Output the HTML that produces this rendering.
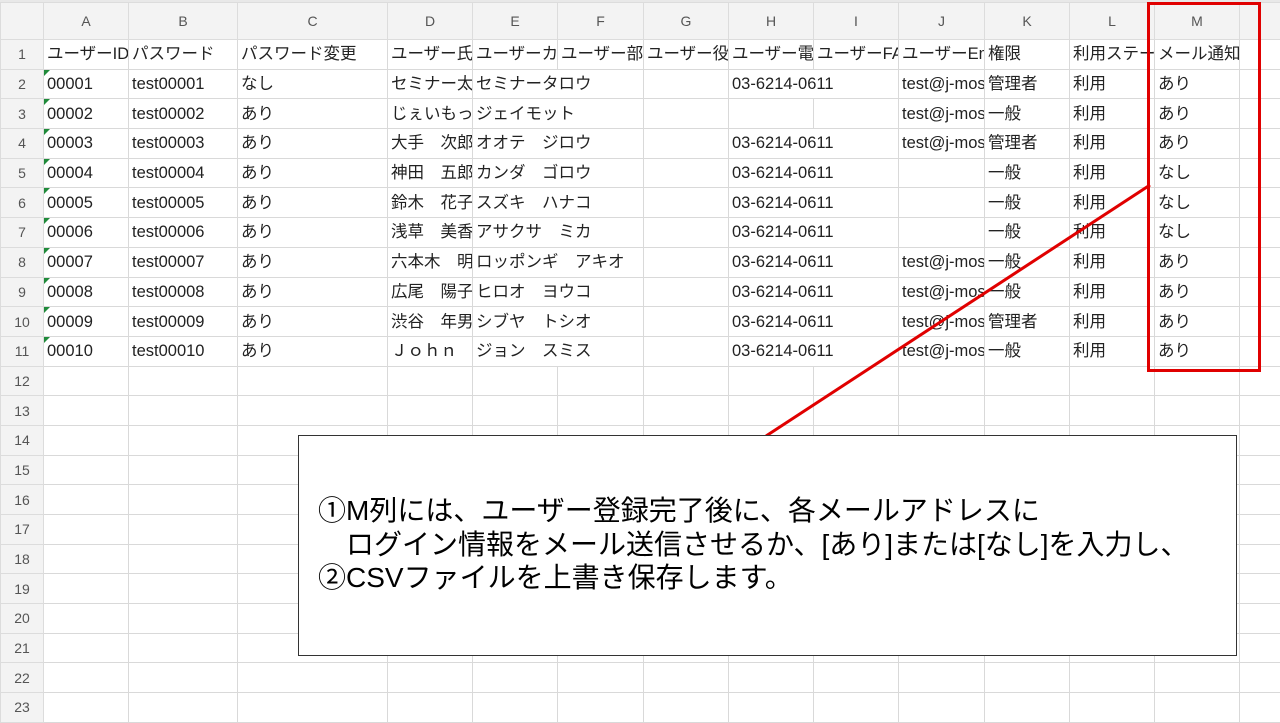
<!DOCTYPE html>
<html><head><meta charset="utf-8">
<style>
body{margin:0;width:1280px;height:720px;overflow:hidden;background:#fff;font-family:"Liberation Sans","Noto Sans CJK JP",sans-serif;position:relative}
.strip{position:absolute;left:0;top:0;width:1280px;height:3px;background:#e8e8e8}
table{position:absolute;left:0;top:2px;width:1280px;border-collapse:collapse;table-layout:fixed}
td{border:1px solid #d9d9d9;padding:0;height:28.7px;font-size:16.5px;color:#222;overflow:hidden;white-space:nowrap}
td div{overflow:hidden;white-space:nowrap;padding-left:3px;line-height:28px;height:28px}
tr.h td{height:36px;background:#f3f3f3;color:#555;font-size:14px;text-align:center;border-color:#dcdcdc}
td.r{background:#f3f3f3;color:#555;font-size:14px;text-align:center;border-color:#dcdcdc}
td.g{position:relative}
td.g:before{content:"";position:absolute;left:0;top:0;border-top:6px solid #1f8a3a;border-right:6px solid transparent}
</style></head><body>
<div class="strip"></div>
<table>
<colgroup><col style="width:43px"><col style="width:85px"><col style="width:109px"><col style="width:150px"><col style="width:85px"><col style="width:85px"><col style="width:86px"><col style="width:85px"><col style="width:85px"><col style="width:85px"><col style="width:86px"><col style="width:85px"><col style="width:85px"><col style="width:85px"><col style="width:41px"></colgroup>
<tr class="h"><td></td><td>A</td><td>B</td><td>C</td><td>D</td><td>E</td><td>F</td><td>G</td><td>H</td><td>I</td><td>J</td><td>K</td><td>L</td><td>M</td><td></td></tr>
<tr><td class="r">1</td><td><div>ユーザーID</div></td><td><div>パスワード</div></td><td><div>パスワード変更</div></td><td><div>ユーザー氏名</div></td><td><div>ユーザーカナ</div></td><td><div>ユーザー部署</div></td><td><div>ユーザー役職</div></td><td><div>ユーザー電話</div></td><td><div>ユーザーFAX</div></td><td><div>ユーザーEmail</div></td><td><div>権限</div></td><td><div>利用ステータス</div></td><td><div>メール通知</div></td><td></td></tr>
<tr><td class="r">2</td><td class="g"><div>00001</div></td><td><div>test00001</div></td><td><div>なし</div></td><td><div>セミナー太郎</div></td><td colspan="2"><div>セミナータロウ</div></td><td></td><td colspan="2"><div>03-6214-0611</div></td><td><div>test@j-moss</div></td><td><div>管理者</div></td><td><div>利用</div></td><td><div>あり</div></td><td></td></tr>
<tr><td class="r">3</td><td class="g"><div>00002</div></td><td><div>test00002</div></td><td><div>あり</div></td><td><div>じぇいもっと</div></td><td colspan="2"><div>ジェイモット</div></td><td></td><td></td><td></td><td><div>test@j-moss</div></td><td><div>一般</div></td><td><div>利用</div></td><td><div>あり</div></td><td></td></tr>
<tr><td class="r">4</td><td class="g"><div>00003</div></td><td><div>test00003</div></td><td><div>あり</div></td><td><div>大手　次郎</div></td><td colspan="2"><div>オオテ　ジロウ</div></td><td></td><td colspan="2"><div>03-6214-0611</div></td><td><div>test@j-moss</div></td><td><div>管理者</div></td><td><div>利用</div></td><td><div>あり</div></td><td></td></tr>
<tr><td class="r">5</td><td class="g"><div>00004</div></td><td><div>test00004</div></td><td><div>あり</div></td><td><div>神田　五郎</div></td><td colspan="2"><div>カンダ　ゴロウ</div></td><td></td><td colspan="2"><div>03-6214-0611</div></td><td></td><td><div>一般</div></td><td><div>利用</div></td><td><div>なし</div></td><td></td></tr>
<tr><td class="r">6</td><td class="g"><div>00005</div></td><td><div>test00005</div></td><td><div>あり</div></td><td><div>鈴木　花子</div></td><td colspan="2"><div>スズキ　ハナコ</div></td><td></td><td colspan="2"><div>03-6214-0611</div></td><td></td><td><div>一般</div></td><td><div>利用</div></td><td><div>なし</div></td><td></td></tr>
<tr><td class="r">7</td><td class="g"><div>00006</div></td><td><div>test00006</div></td><td><div>あり</div></td><td><div>浅草　美香</div></td><td colspan="2"><div>アサクサ　ミカ</div></td><td></td><td colspan="2"><div>03-6214-0611</div></td><td></td><td><div>一般</div></td><td><div>利用</div></td><td><div>なし</div></td><td></td></tr>
<tr><td class="r">8</td><td class="g"><div>00007</div></td><td><div>test00007</div></td><td><div>あり</div></td><td><div>六本木　明</div></td><td colspan="2"><div>ロッポンギ　アキオ</div></td><td></td><td colspan="2"><div>03-6214-0611</div></td><td><div>test@j-moss</div></td><td><div>一般</div></td><td><div>利用</div></td><td><div>あり</div></td><td></td></tr>
<tr><td class="r">9</td><td class="g"><div>00008</div></td><td><div>test00008</div></td><td><div>あり</div></td><td><div>広尾　陽子</div></td><td colspan="2"><div>ヒロオ　ヨウコ</div></td><td></td><td colspan="2"><div>03-6214-0611</div></td><td><div>test@j-moss</div></td><td><div>一般</div></td><td><div>利用</div></td><td><div>あり</div></td><td></td></tr>
<tr><td class="r">10</td><td class="g"><div>00009</div></td><td><div>test00009</div></td><td><div>あり</div></td><td><div>渋谷　年男</div></td><td colspan="2"><div>シブヤ　トシオ</div></td><td></td><td colspan="2"><div>03-6214-0611</div></td><td><div>test@j-moss</div></td><td><div>管理者</div></td><td><div>利用</div></td><td><div>あり</div></td><td></td></tr>
<tr><td class="r">11</td><td class="g"><div>00010</div></td><td><div>test00010</div></td><td><div>あり</div></td><td><div>Ｊｏｈｎ　Ｓ</div></td><td colspan="2"><div>ジョン　スミス</div></td><td></td><td colspan="2"><div>03-6214-0611</div></td><td><div>test@j-moss</div></td><td><div>一般</div></td><td><div>利用</div></td><td><div>あり</div></td><td></td></tr>
<tr><td class="r">12</td><td></td><td></td><td></td><td></td><td></td><td></td><td></td><td></td><td></td><td></td><td></td><td></td><td></td><td></td></tr>
<tr><td class="r">13</td><td></td><td></td><td></td><td></td><td></td><td></td><td></td><td></td><td></td><td></td><td></td><td></td><td></td><td></td></tr>
<tr><td class="r">14</td><td></td><td></td><td></td><td></td><td></td><td></td><td></td><td></td><td></td><td></td><td></td><td></td><td></td><td></td></tr>
<tr><td class="r">15</td><td></td><td></td><td></td><td></td><td></td><td></td><td></td><td></td><td></td><td></td><td></td><td></td><td></td><td></td></tr>
<tr><td class="r">16</td><td></td><td></td><td></td><td></td><td></td><td></td><td></td><td></td><td></td><td></td><td></td><td></td><td></td><td></td></tr>
<tr><td class="r">17</td><td></td><td></td><td></td><td></td><td></td><td></td><td></td><td></td><td></td><td></td><td></td><td></td><td></td><td></td></tr>
<tr><td class="r">18</td><td></td><td></td><td></td><td></td><td></td><td></td><td></td><td></td><td></td><td></td><td></td><td></td><td></td><td></td></tr>
<tr><td class="r">19</td><td></td><td></td><td></td><td></td><td></td><td></td><td></td><td></td><td></td><td></td><td></td><td></td><td></td><td></td></tr>
<tr><td class="r">20</td><td></td><td></td><td></td><td></td><td></td><td></td><td></td><td></td><td></td><td></td><td></td><td></td><td></td><td></td></tr>
<tr><td class="r">21</td><td></td><td></td><td></td><td></td><td></td><td></td><td></td><td></td><td></td><td></td><td></td><td></td><td></td><td></td></tr>
<tr><td class="r">22</td><td></td><td></td><td></td><td></td><td></td><td></td><td></td><td></td><td></td><td></td><td></td><td></td><td></td><td></td></tr>
<tr><td class="r">23</td><td></td><td></td><td></td><td></td><td></td><td></td><td></td><td></td><td></td><td></td><td></td><td></td><td></td><td></td></tr>
</table>
<div style="position:absolute;left:1147px;top:2px;width:108px;height:364px;border:3px solid #e00000"></div>
<svg style="position:absolute;left:0;top:0" width="1280" height="720"><line x1="1150" y1="185" x2="766" y2="436" stroke="#e00000" stroke-width="3"/></svg>
<div style="position:absolute;left:298px;top:435px;width:937px;height:219px;border:1px solid #333;background:#fff;font-size:28px;line-height:33.5px;color:#000;font-family:'Liberation Sans','Noto Sans CJK JP',sans-serif">
<div style="position:absolute;left:19px;top:58px;white-space:nowrap">①M列には、ユーザー登録完了後に、各メールアドレスに<br>&#12288;ログイン情報をメール送信させるか、[あり]または[なし]を入力し、<br>②CSVファイルを上書き保存します。</div>
</div>
</body></html>
